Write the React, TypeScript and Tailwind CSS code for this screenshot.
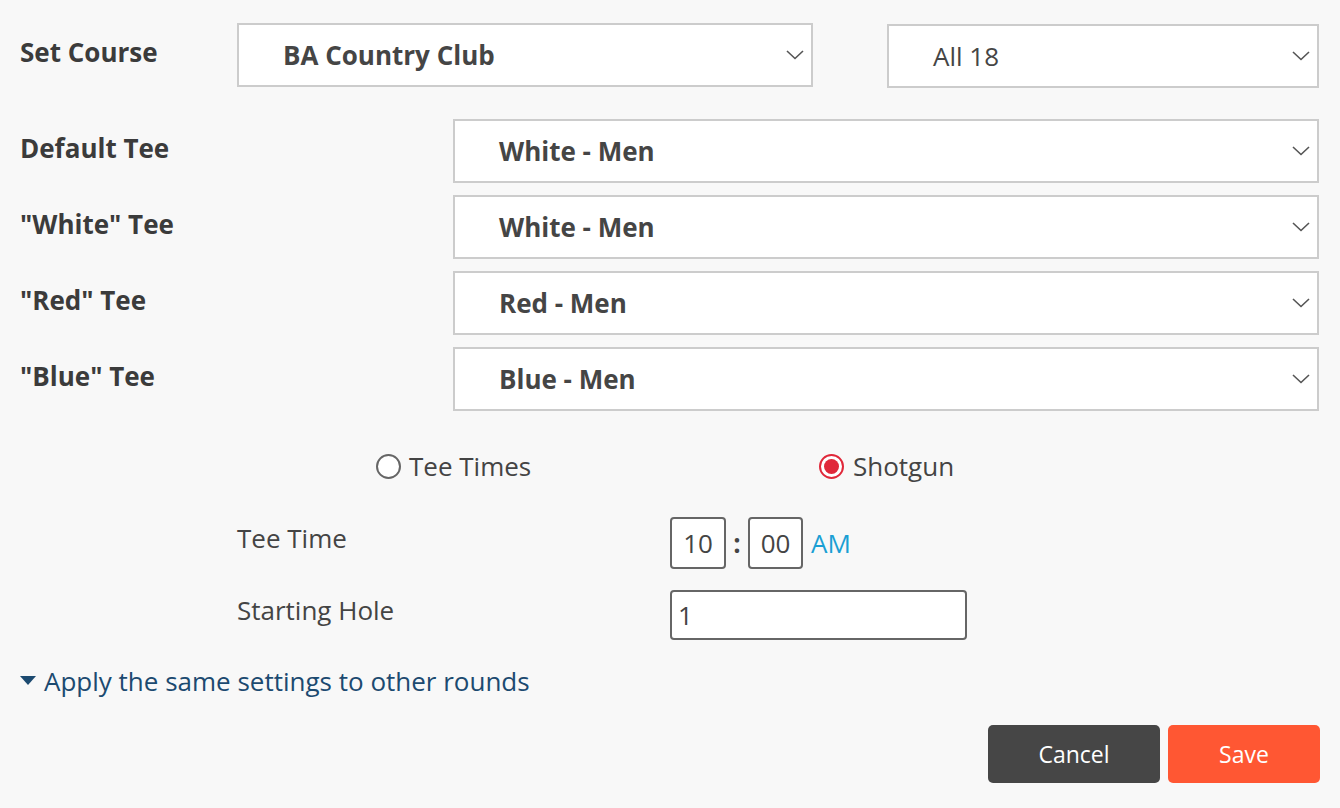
import React from "react";

const font = { fontFamily: "'Open Sans', Lato, sans-serif" };

function Chevron() {
  return (
    <svg width="18" height="10" viewBox="0 0 18 10" className="shrink-0">
      <path d="M1 1 L9 8.5 L17 1" fill="none" stroke="#555" strokeWidth="1.6" />
    </svg>
  );
}

function Select({ value, bold = true, className = "" }: { value: string; bold?: boolean; className?: string }) {
  return (
    <div className={`h-[64px] bg-white border-2 border-[#cccccc] flex items-center pl-[44px] pr-[7px] ${className}`}>
      <span className={`flex-1 text-[26px] leading-[30px] text-[#454545] ${bold ? "font-bold" : "font-normal"}`}>{value}</span>
      <Chevron />
    </div>
  );
}

function TeeRow({ label, value }: { label: string; value: string }) {
  return (
    <div className="flex items-center h-[64px]">
      <div className="w-[433px] text-[26px] leading-[30px] font-bold text-[#3b3b3b] -mt-[6px]">{label}</div>
      <Select value={value} className="flex-1" />
    </div>
  );
}

export default function App() {
  return (
    <div style={font} className="w-full h-[808px] bg-[#f8f8f8] pl-[20px] pr-[21px] pt-[23px] overflow-hidden">
      <div className="flex items-center h-[64px]">
        <div className="w-[217px] text-[26px] leading-[30px] font-bold text-[#3b3b3b] -mt-[6px]">Set Course</div>
        <Select value="BA Country Club" className="w-[576px]" />
        <div className="w-[74px]" />
        <Select value="All 18" bold={false} className="flex-1 mt-[2px]" />
      </div>

      <div className="mt-[32px] flex flex-col gap-[12px]">
        <TeeRow label="Default Tee" value="White - Men" />
        <TeeRow label={'"White" Tee'} value="White - Men" />
        <TeeRow label={'"Red" Tee'} value="Red - Men" />
        <TeeRow label={'"Blue" Tee'} value="Blue - Men" />
      </div>

      <div className="mt-[42px] flex items-center h-[26px] pl-[356px] text-[26px] leading-[30px] text-[#444]">
        <label className="w-[443px] flex items-center gap-[8px]">
          <span className="w-[25px] h-[25px] rounded-full border-2 border-[#666] bg-white shrink-0" />
          <span>Tee Times</span>
        </label>
        <label className="flex items-center gap-[9px]">
          <span className="w-[25px] h-[25px] rounded-full border-2 border-[#e0283a] bg-white flex items-center justify-center shrink-0">
            <span className="w-[15px] h-[15px] rounded-full bg-[#e0283a]" />
          </span>
          <span>Shotgun</span>
        </label>
      </div>

      <div className="mt-[38px] flex items-center h-[52px] pl-[217px]">
        <div className="w-[433px] text-[26px] leading-[30px] text-[#444] -mt-[10px]">Tee Time</div>
        <div className="flex items-center">
          <div className="w-[56px] h-[52px] border-2 border-[#666] rounded-[4px] bg-white flex items-center justify-center text-[26px] text-[#444]">10</div>
          <span className="w-[22px] text-center text-[26px] font-bold text-[#444]">:</span>
          <div className="w-[55px] h-[52px] border-2 border-[#666] rounded-[4px] bg-white flex items-center justify-center text-[26px] text-[#444]">00</div>
          <span className="ml-[8px] text-[26px] text-[#1a9fd4]">AM</span>
        </div>
      </div>

      <div className="mt-[21px] flex items-center h-[50px] pl-[217px]">
        <div className="w-[433px] text-[26px] leading-[30px] text-[#444] -mt-[10px]">Starting Hole</div>
        <div className="w-[297px] h-[50px] border-2 border-[#666] rounded-[4px] bg-white flex items-center pl-[6px] text-[26px] text-[#444]">1</div>
      </div>

      <div className="mt-[27px] flex items-center h-[28px] gap-[8px] text-[26px] leading-[28px] text-[#1c4a70]">
        <svg width="16" height="10" viewBox="0 0 16 10">
          <path d="M0 0 L16 0 L8 9 Z" fill="#1c4a70" />
        </svg>
        <span>Apply the same settings to other rounds</span>
      </div>

      <div className="mt-[30px] flex justify-end gap-[8px]">
        <button className="w-[172px] h-[58px] rounded-[5px] bg-[#464646] text-white text-[23px]">Cancel</button>
        <button className="w-[152px] h-[58px] rounded-[5px] bg-[#ff5733] text-white text-[23px] -mr-[1px]">Save</button>
      </div>
    </div>
  );
}
